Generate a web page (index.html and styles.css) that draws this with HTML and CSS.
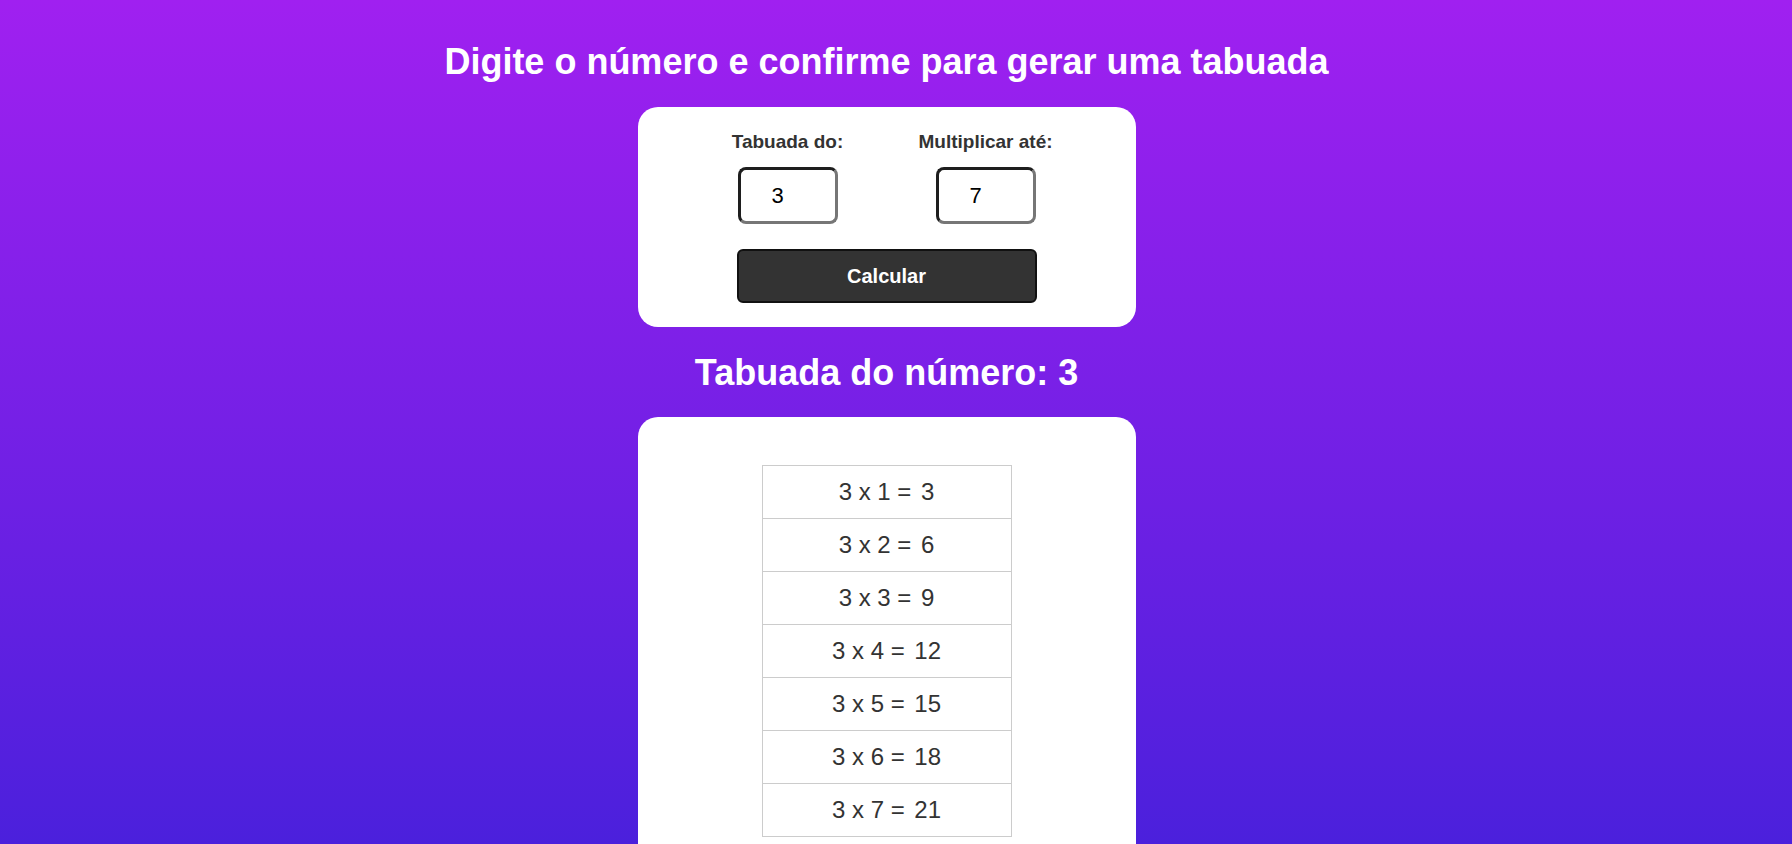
FILE: index.html
```html
<!DOCTYPE html>
<html lang="pt-BR">
<head>
<meta charset="utf-8">
<title>Tabuada</title>
<link rel="stylesheet" href="styles.css">
</head>
<body>
<main class="page">
  <h1 class="title">Digite o número e confirme para gerar uma tabuada</h1>
  <section class="card form-card">
    <div class="fields">
      <div class="field">
        <label class="field-label" for="num">Tabuada do:</label>
        <input class="field-input" id="num" type="text" value="3">
      </div>
      <div class="field">
        <label class="field-label" for="ate">Multiplicar até:</label>
        <input class="field-input" id="ate" type="text" value="7">
      </div>
    </div>
    <button class="btn" type="button">Calcular</button>
  </section>
  <h2 class="subtitle">Tabuada do número: 3</h2>
  <section class="card result-card">
    <table class="table">
      <tbody>
        <tr><td>3 x 1 = <span class="res">3</span></td></tr>
        <tr><td>3 x 2 = <span class="res">6</span></td></tr>
        <tr><td>3 x 3 = <span class="res">9</span></td></tr>
        <tr><td>3 x 4 = <span class="res">12</span></td></tr>
        <tr><td>3 x 5 = <span class="res">15</span></td></tr>
        <tr><td>3 x 6 = <span class="res">18</span></td></tr>
        <tr><td>3 x 7 = <span class="res">21</span></td></tr>
      </tbody>
    </table>
  </section>
</main>
</body>
</html>
```
FILE: styles.css
```css
html {
  background: linear-gradient(to bottom, #a020f0 0px, #4b20dc 844px, #4520da 1000px);
  min-height: 100%;
}
body {
  margin: 0;
  font-family: "Liberation Sans", Arial, sans-serif;
  color: #333;
}
.page {
  display: flex;
  flex-direction: column;
  align-items: center;
  padding-top: 41px;
  padding-right: 19px;
  padding-bottom: 40px;
}
.title {
  margin: 0 0 25px;
  font-size: 36px;
  font-weight: bold;
  color: #fff;
  line-height: 41px;
}
.card {
  width: 498px;
  box-sizing: border-box;
  background: #fff;
  border-radius: 20px;
}
.form-card {
  padding: 24px 0 24px;
  display: flex;
  flex-direction: column;
  align-items: center;
}
.fields {
  display: grid;
  grid-template-columns: 198px 198px;
  justify-content: center;
}
.field {
  display: flex;
  flex-direction: column;
  align-items: center;
}
.field-label {
  font-size: 19px;
  font-weight: bold;
  line-height: 22px;
  color: #333;
  margin-bottom: 14px;
}
.field-input {
  width: 100px;
  height: 57px;
  box-sizing: border-box;
  border: 3px solid;
  border-color: #1e1e1e #767676 #767676 #1e1e1e;
  border-radius: 8px;
  padding: 0 0 0 31px;
  font-family: "Liberation Sans", Arial, sans-serif;
  font-size: 22px;
  color: #000;
  background: #fff;
  outline: none;
}
.btn {
  margin-top: 25px;
  width: 300px;
  height: 54px;
  box-sizing: border-box;
  background: #333;
  border: 2px solid #111;
  border-radius: 6px;
  color: #fff;
  font-family: "Liberation Sans", Arial, sans-serif;
  font-size: 20px;
  font-weight: bold;
}
.subtitle {
  margin: 25px 0 24px;
  font-size: 36px;
  line-height: 41px;
  font-weight: bold;
  color: #fff;
}
.result-card {
  padding: 48px 0 48px;
  display: flex;
  justify-content: center;
}
.table {
  width: 250px;
  border-collapse: collapse;
}
.table td {
  border: 1px solid #ccc;
  height: 53px;
  box-sizing: border-box;
  padding: 0;
  text-align: center;
  font-size: 24px;
  color: #333;
}
.res {
  margin-left: 3px;
}
```
